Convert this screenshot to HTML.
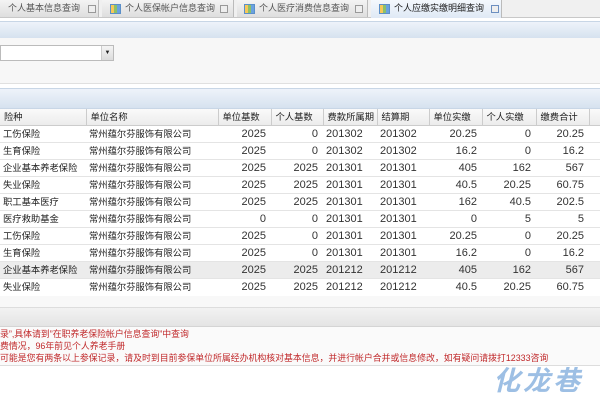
<!DOCTYPE html><html><head><meta charset="utf-8"><style>
body{margin:0;width:600px;height:409px;overflow:hidden;background:#fff;font-family:"Liberation Sans","Noto Sans CJK SC",sans-serif;font-size:9px;color:#222;position:relative}
.a{position:absolute}
.tab{position:absolute;top:0;height:17px;background:linear-gradient(#f4f4f4,#dedede);border-right:1px solid #bbb;color:#555;line-height:17px;font-size:9px;white-space:nowrap}
.ic{position:absolute;top:4px;width:9px;height:8px;border:1px solid #5b8fc8;background:linear-gradient(90deg,#f7c85a 33%,#8cc16a 33%,#8cc16a 66%,#6aa2e0 66%)}
.cl{position:absolute;top:5px;width:6px;height:6px;border:1px solid #999;background:#eee}
.hd{background:linear-gradient(#eef3fa,#d6e2ef);border-top:1px solid #c8d6e6;border-bottom:1px solid #c8d6e6}
table{border-collapse:collapse;position:absolute;left:0;top:109px;width:600px;table-layout:fixed}
td{height:16px;line-height:16px;border-bottom:1px solid #e4e4e4;padding:0 3px;white-space:nowrap;overflow:hidden;font-size:9.3px}
td.n,td.r{font-size:11px;color:#333}
td.r{padding-right:5px}
th{height:16px;line-height:16px;font-weight:normal;text-align:left;padding:0 4px;border-right:1px solid #ccc;border-bottom:1px solid #ccc;background:linear-gradient(#fafafa,#ececec);font-size:9.3px;white-space:nowrap;overflow:hidden}
.r{text-align:right}
.red{position:absolute;left:0;color:#c0282a;font-size:8.9px;white-space:nowrap}
</style></head><body>
<div class="a" style="left:0;top:0;width:600px;height:17px;background:#f0f0f0;border-bottom:1px solid #c8c8c8"></div>
<div class="tab" style="left:0;width:98px"><span style="position:absolute;left:8px">个人基本信息查询</span><div class="cl" style="left:88px"></div></div>
<div class="tab" style="left:102px;width:131px"><div class="ic" style="left:8px"></div><span style="position:absolute;left:23px">个人医保帐户信息查询</span><div class="cl" style="left:118px"></div></div>
<div class="tab" style="left:237px;width:130px"><div class="ic" style="left:7px"></div><span style="position:absolute;left:22px">个人医疗消费信息查询</span><div class="cl" style="left:118px"></div></div>
<div class="tab" style="left:371px;width:130px;background:linear-gradient(#f4f8fd,#dfe9f5);color:#222;height:18px"><div class="ic" style="left:8px"></div><span style="position:absolute;left:23px">个人应缴实缴明细查询</span><div class="cl" style="left:120px;border-color:#6c8fc0"></div></div>
<div class="a hd" style="left:0;top:21px;width:600px;height:16px"></div>
<div class="a" style="left:0;top:38px;width:600px;height:45px;background:#f7f7f7;border-bottom:1px solid #e0e0e0"></div>
<div class="a" style="left:0;top:45px;width:112px;height:14px;border:1px solid #bbb;background:#fff"></div>
<div class="a" style="left:101px;top:46px;width:11px;height:14px;background:linear-gradient(#f4f4f4,#dcdcdc);border-left:1px solid #ccc;font-size:6px;text-align:center;line-height:14px">▼</div>
<div class="a hd" style="left:0;top:88px;width:600px;height:19px"></div>
<table>
<colgroup><col style="width:86px"><col style="width:132px"><col style="width:53px"><col style="width:52px"><col style="width:54px"><col style="width:52px"><col style="width:53px"><col style="width:54px"><col style="width:53px"><col></colgroup>
<tr><th>险种</th><th>单位名称</th><th>单位基数</th><th>个人基数</th><th>费款所属期</th><th>结算期</th><th>单位实缴</th><th>个人实缴</th><th>缴费合计</th><th style="border-right:0"></th></tr>
<tr><td>工伤保险</td><td>常州蕴尔芬服饰有限公司</td><td class="r">2025</td><td class="r">0</td><td class="n">201302</td><td class="n">201302</td><td class="r">20.25</td><td class="r">0</td><td class="r">20.25</td><td></td></tr>
<tr><td>生育保险</td><td>常州蕴尔芬服饰有限公司</td><td class="r">2025</td><td class="r">0</td><td class="n">201302</td><td class="n">201302</td><td class="r">16.2</td><td class="r">0</td><td class="r">16.2</td><td></td></tr>
<tr><td>企业基本养老保险</td><td>常州蕴尔芬服饰有限公司</td><td class="r">2025</td><td class="r">2025</td><td class="n">201301</td><td class="n">201301</td><td class="r">405</td><td class="r">162</td><td class="r">567</td><td></td></tr>
<tr><td>失业保险</td><td>常州蕴尔芬服饰有限公司</td><td class="r">2025</td><td class="r">2025</td><td class="n">201301</td><td class="n">201301</td><td class="r">40.5</td><td class="r">20.25</td><td class="r">60.75</td><td></td></tr>
<tr><td>职工基本医疗</td><td>常州蕴尔芬服饰有限公司</td><td class="r">2025</td><td class="r">2025</td><td class="n">201301</td><td class="n">201301</td><td class="r">162</td><td class="r">40.5</td><td class="r">202.5</td><td></td></tr>
<tr><td>医疗救助基金</td><td>常州蕴尔芬服饰有限公司</td><td class="r">0</td><td class="r">0</td><td class="n">201301</td><td class="n">201301</td><td class="r">0</td><td class="r">5</td><td class="r">5</td><td></td></tr>
<tr><td>工伤保险</td><td>常州蕴尔芬服饰有限公司</td><td class="r">2025</td><td class="r">0</td><td class="n">201301</td><td class="n">201301</td><td class="r">20.25</td><td class="r">0</td><td class="r">20.25</td><td></td></tr>
<tr><td>生育保险</td><td>常州蕴尔芬服饰有限公司</td><td class="r">2025</td><td class="r">0</td><td class="n">201301</td><td class="n">201301</td><td class="r">16.2</td><td class="r">0</td><td class="r">16.2</td><td></td></tr>
<tr style="background:#ececec"><td>企业基本养老保险</td><td>常州蕴尔芬服饰有限公司</td><td class="r">2025</td><td class="r">2025</td><td class="n">201212</td><td class="n">201212</td><td class="r">405</td><td class="r">162</td><td class="r">567</td><td></td></tr>
<tr><td style="border:0">失业保险</td><td style="border:0">常州蕴尔芬服饰有限公司</td><td class="r" style="border:0">2025</td><td class="r" style="border:0">2025</td><td class="n" style="border:0">201212</td><td class="n" style="border:0">201212</td><td class="r" style="border:0">40.5</td><td class="r" style="border:0">20.25</td><td class="r" style="border:0">60.75</td><td style="border:0"></td></tr>
</table>
<div class="a" style="left:0;top:296px;width:600px;height:11px;background:#f8f8f8;border-bottom:1px solid #ddd"></div>
<div class="a" style="left:0;top:308px;width:600px;height:18px;background:linear-gradient(#f2f2f2,#e4e4e4);border-bottom:1px solid #d4d4d4"></div>
<div class="a" style="left:0;top:327px;width:600px;height:38px;background:#fafafa;border-bottom:1px solid #ddd"></div>
<div class="red" style="top:327px">录”,具体请到”在职养老保险帐户信息查询”中查询</div>
<div class="red" style="top:339px">费情况，96年前见个人养老手册</div>
<div class="red" style="top:351px">可能是您有两条以上参保记录，请及时到目前参保单位所属经办机构核对基本信息，并进行帐户合并或信息修改，如有疑问请拨打12333咨询</div>
<div class="a" style="left:493px;top:366px;font-size:27px;font-style:italic;font-weight:bold;color:#9dbfe4;letter-spacing:3px;line-height:30px">化龙巷</div>
</body></html>
